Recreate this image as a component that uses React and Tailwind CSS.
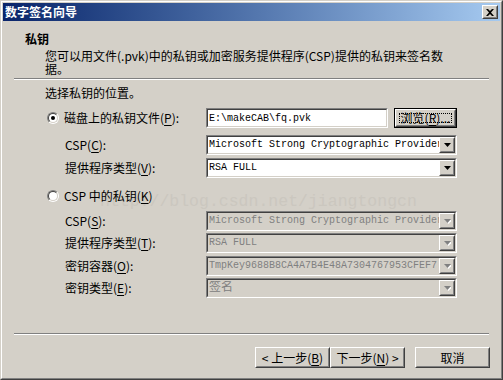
import React from "react";

const cjk = "font-['Noto_Sans_CJK_SC','Liberation_Sans',sans-serif]";
const mono = "font-['Liberation_Mono','Noto_Sans_CJK_SC',monospace]";

// sunken 3d edge (text boxes, combos)
function Sunken({ className = "", inner = "", children }) {
  return (
    <div className={`border border-t-[#808080] border-l-[#808080] border-r-white border-b-white ${className}`}>
      <div className={`flex h-full items-center border border-t-[#404040] border-l-[#404040] border-r-[#d4d0c8] border-b-[#d4d0c8] ${inner}`}>
        {children}
      </div>
    </div>
  );
}

// raised 3d edge (buttons)
function Raised({ className = "", inner = "", children }) {
  return (
    <div className={`border border-t-white border-l-white border-r-[#404040] border-b-[#404040] bg-[#d4d0c8] ${className}`}>
      <div className={`flex h-full items-center justify-center border border-t-[#d4d0c8] border-l-[#d4d0c8] border-r-[#808080] border-b-[#808080] ${inner}`}>
        {children}
      </div>
    </div>
  );
}

const Arrow = ({ disabled }) => (
  <svg width="7" height="5" viewBox="0 0 7 5">
    {disabled && <polygon points="1,1 8,1 4.5,5" fill="#ffffff" />}
    <polygon points="0,0 7,0 3.5,4" fill={disabled ? "#808080" : "#000000"} />
  </svg>
);

function Combo({ value, disabled, wide }) {
  return (
    <Sunken className="h-[20px] w-[251px]" inner={disabled ? "bg-[#d4d0c8]" : "bg-white"}>
      <span
        className={`flex-1 overflow-hidden whitespace-nowrap pl-[1px] leading-[14px] ${mono} ${
          wide ? "text-[12px]" : "text-[10px]"
        } ${disabled ? "text-[#808080]" : "text-black"}`}
      >
        {value}
      </span>
      <Raised className="h-[16px] w-[16px] shrink-0">
        <Arrow disabled={disabled} />
      </Raised>
    </Sunken>
  );
}

function Radio({ checked }) {
  return (
    <div className="h-[12px] w-[12px] shrink-0 rounded-full border border-t-[#808080] border-l-[#808080] border-r-white border-b-white">
      <div className="flex h-full w-full items-center justify-center rounded-full border border-t-[#404040] border-l-[#404040] border-r-[#d4d0c8] border-b-[#d4d0c8] bg-white">
        {checked && <div className="h-[4px] w-[4px] rounded-full bg-black" />}
      </div>
    </div>
  );
}

const U = ({ children }) => <span className="underline underline-offset-2">{children}</span>;

function Row({ label, children }) {
  return (
    <div className="flex h-[20px] items-center">
      <div className="w-[203px] pl-[62px] whitespace-nowrap">{label}</div>
      {children}
    </div>
  );
}

export default function App() {
  return (
    <div className={`h-[380px] w-[503px] border border-t-[#d4d0c8] border-l-[#d4d0c8] border-r-[#404040] border-b-[#404040] text-[12px] text-black ${cjk}`}>
      <div className="h-full border border-t-white border-l-white border-r-[#808080] border-b-[#808080] bg-[#d4d0c8] p-[1px] flex flex-col">
        {/* title bar */}
        <div className="flex h-[18px] shrink-0 items-center justify-between bg-linear-to-r from-[#0a246a] to-[#a6caf0] pl-[2px] pr-[2px]">
          <span className="font-bold text-white leading-[14px]">数字签名向导</span>
          <Raised className="h-[14px] w-[16px]">
            <svg width="8" height="7" viewBox="0 0 8 7">
              <path d="M0 0h2l2 2 2-2h2L5 3.5 8 7H6L4 5 2 7H0l3-3.5z" fill="#000" />
            </svg>
          </Raised>
        </div>

        {/* body */}
        <div className="relative flex flex-1 flex-col">
          {/* watermark sits behind the controls */}
          <div className={`pointer-events-none absolute left-[97px] top-[171px] text-[16.5px] leading-[20px] text-[#cbc7bf] ${mono}`}>
            http://blog.csdn.net/jiangtongcn
          </div>

          <div className="mt-[11px] pl-[22px] font-bold leading-[13px]">私钥</div>
          <div className="mt-[4px] pl-[42px] leading-[13px] whitespace-nowrap">
            您可以用文件(.pvk)中的私钥或加密服务提供程序(CSP)提供的私钥来签名数
            <br />
            据。
          </div>
          <div className="mx-[11px] mt-[3px] h-[2px] border-t border-t-[#808080] border-b border-b-white" />

          <div className="mt-[6px] pl-[42px] leading-[13px]">选择私钥的位置。</div>

          <div className="relative mt-[9px] flex h-[20px] items-center">
            <div className="flex w-[203px] items-center gap-[5px] pl-[44px]">
              <Radio checked />
              <span className="whitespace-nowrap">
                磁盘上的私钥文件(<U>P</U>):
              </span>
            </div>
            <Sunken className="h-[20px] w-[182px]" inner="bg-white">
              <span className={`pl-[1px] text-[10px] ${mono}`}>E:\makeCAB\fq.pvk</span>
            </Sunken>
            <div className="ml-[6px] h-[20px] w-[63px] border border-black">
              <Raised className="h-full w-full" inner="p-[2px]">
                <div className="flex h-full w-full items-center justify-center border border-dotted border-black leading-[12px]">
                  浏览(<U>R</U>)...
                </div>
              </Raised>
            </div>
          </div>

          <div className="mt-[7px]">
            <Row label={<>CSP(<U>C</U>):</>}>
              <Combo value="Microsoft Strong Cryptographic Provider" />
            </Row>
          </div>
          <div className="mt-[3px]">
            <Row label={<>提供程序类型(<U>V</U>):</>}>
              <Combo value="RSA FULL" />
            </Row>
          </div>

          <div className="relative mt-[10px] flex h-[16px] items-center gap-[5px] pl-[44px]">
            <Radio />
            <span className="whitespace-nowrap">
              CSP 中的私钥(<U>K</U>)
            </span>
          </div>

          <div className="relative mt-[7px]">
            <Row label={<>CSP(<U>S</U>):</>}>
              <Combo disabled value="Microsoft Strong Cryptographic Provider" />
            </Row>
          </div>
          <div className="mt-[2px]">
            <Row label={<>提供程序类型(<U>T</U>):</>}>
              <Combo disabled value="RSA FULL" />
            </Row>
          </div>
          <div className="mt-[3px]">
            <Row label={<>密钥容器(<U>O</U>):</>}>
              <Combo disabled value="TmpKey9688B8CA4A7B4E48A7304767953CFEF7" />
            </Row>
          </div>
          <div className="mt-[2px]">
            <Row label={<>密钥类型(<U>E</U>):</>}>
              <Combo disabled wide value="签名" />
            </Row>
          </div>

          <div className="mx-[11px] mt-[35px] h-[2px] border-t border-t-[#808080] border-b border-b-white" />

          <div className="mt-[12px] flex pl-[252px]">
            <Raised className="h-[21px] w-[75px]">
              <span className="leading-[12px]">
                &lt; 上一步(<U>B</U>)
              </span>
            </Raised>
            <Raised className="h-[21px] w-[75px]">
              <span className="leading-[12px]">
                下一步(<U>N</U>) &gt;
              </span>
            </Raised>
            <Raised className="ml-[10px] h-[21px] w-[75px]">
              <span className="leading-[12px]">取消</span>
            </Raised>
          </div>
        </div>
      </div>
    </div>
  );
}
